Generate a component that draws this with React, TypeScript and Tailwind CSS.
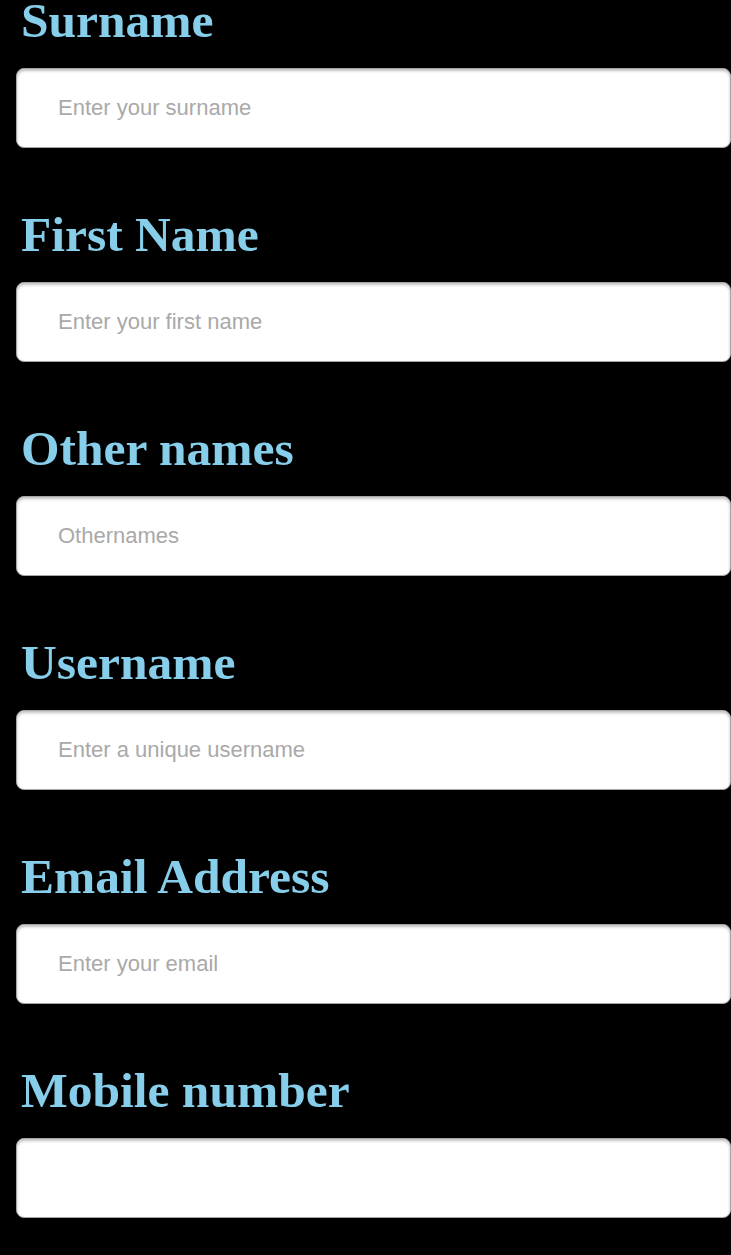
const fields = [
  { label: "Surname", placeholder: "Enter your surname", type: "text" },
  { label: "First Name", placeholder: "Enter your first name", type: "text" },
  { label: "Other names", placeholder: "Othernames", type: "text" },
  { label: "Username", placeholder: "Enter a unique username", type: "text" },
  { label: "Email Address", placeholder: "Enter your email", type: "email" },
  { label: "Mobile number", placeholder: "", type: "tel" },
];

export default function App() {
  return (
    <div className="min-h-[1255px] w-full bg-black overflow-hidden">
      <form className="-mt-1 flex flex-col">
        {fields.map((f) => (
          <div key={f.label} className="flex flex-col h-[214px]">
            <label className="pl-[21px] text-[49.5px] leading-[50px] font-bold text-[#87ceeb] font-['Liberation_Serif',serif] whitespace-nowrap">
              {f.label}
            </label>
            <input
              type={f.type}
              placeholder={f.placeholder}
              className="mt-[22px] ml-4 h-[80px] w-[calc(100%-16px)] rounded-lg border border-[#a6a6a6] bg-white pl-[41px] text-[22px] text-gray-800 placeholder:text-[#a9a9a9] font-['Liberation_Sans',Arial,sans-serif] shadow-[inset_0_2px_3px_rgba(0,0,0,0.25)] outline-none"
            />
          </div>
        ))}
      </form>
    </div>
  );
}
